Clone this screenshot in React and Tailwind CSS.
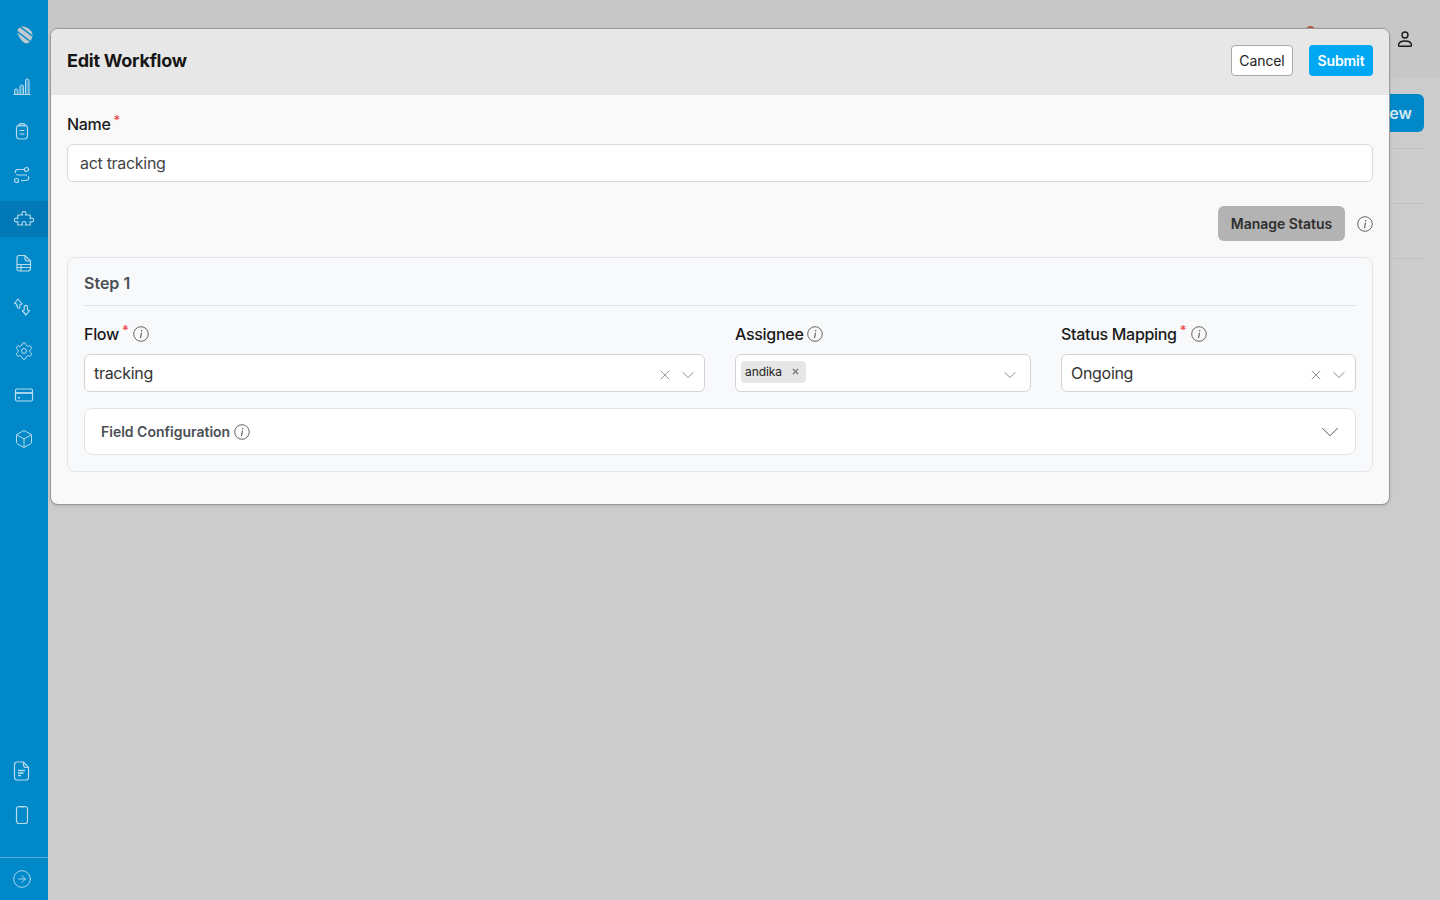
import { Box, ChevronDown, CircleArrowRight, Settings, X } from 'lucide-react'

const font = { fontFamily: 'Inter, "Noto Sans", sans-serif' }

function Bars() {
  return (
    <svg width="18" height="18" viewBox="0 0 18 18" fill="none" stroke="currentColor" strokeWidth="1">
      <path d="M.5 16.500h17" />
      <rect x="1.500" y="11" width="3.500" height="5.500" rx="1.500" fill="#3ea3d6" />
      <rect x="7" y="7" width="3.500" height="9.500" rx="1.500" fill="#3ea3d6" />
      <rect x="12.500" y="1" width="3.500" height="15.500" rx="1.500" fill="#3ea3d6" />
    </svg>
  )
}

function Clipboard() {
  return (
    <svg width="18" height="18" viewBox="0 0 18 18" fill="none" stroke="currentColor" strokeWidth="1.200">
      <rect x="3.500" y="3" width="11" height="14" rx="3.500" />
      <path d="M6 3.500c0-1.500.8-2 2-2h2c1.200 0 2 .5 2 2v.5H6zM6.500 8.500h5M6.500 12h5" />
    </svg>
  )
}

function RouteIcon() {
  return (
    <svg width="18" height="18" viewBox="0 0 18 18" fill="none" stroke="currentColor" strokeWidth="1.200">
      <circle cx="13.500" cy="3.500" r="2" />
      <circle cx="3.500" cy="14.500" r="2" />
      <path d="M11 3.500H5a2.700 2.700 0 0 0 0 5.500h8a2.700 2.700 0 0 1 0 5.500H7.500" strokeDasharray="11 1.500" />
    </svg>
  )
}

function PuzzleIcon() {
  return (
    <svg width="20" height="16" viewBox="0 0 20 16" fill="none" stroke="currentColor" strokeWidth="1.100" strokeLinejoin="round">
      <path d="M3.800 4H8.700a2 2 0 1 1 2.600 0H16.200V7.700a2 2 0 1 1 0 2.600V14H11.300a2 2 0 1 0-2.600 0H3.800V10.300a2 2 0 1 1 0-2.600z" />
    </svg>
  )
}

function Sheet() {
  return (
    <svg width="18" height="18" viewBox="0 0 18 18" fill="none" stroke="currentColor" strokeWidth="1.200">
      <path d="M4 1.500h6l5.500 5.500v7.500a2.500 2.500 0 0 1-2.500 2.500H4a2 2 0 0 1-2-2v-11.500a2 2 0 0 1 2-2z" />
      <path d="M10 1.500v3a2.500 2.500 0 0 0 2.500 2.500h3M2 10.500h13.500M2 13.500h13.500M6 10.500V17" />
    </svg>
  )
}

function Swap() {
  return (
    <svg width="18" height="18" viewBox="0 0 18 18" fill="none" stroke="currentColor" strokeWidth="1.200" strokeLinejoin="round">
      <path d="M5 1 1.500 5.500l2 .5 1 3.500c.4 1 2 1 2.300 0l.2-3 2-.5z" />
      <path d="M13 17l3.500-4.500-2-.5V8.500c0-1.300-3-1.500-3.300 0V12l-2 .5z" />
    </svg>
  )
}

function Card() {
  return (
    <svg width="20" height="20" viewBox="0 0 20 20" fill="none" stroke="currentColor" strokeWidth="1.200">
      <rect x="1.500" y="4" width="17" height="12" rx="1.500" />
      <path d="M1.500 8h17" strokeWidth="1.800" />
      <path d="M4 12.800h2" strokeWidth="1.600" />
    </svg>
  )
}

function Doc() {
  return (
    <svg width="18" height="20" viewBox="0 0 18 20" fill="none" stroke="currentColor" strokeWidth="1.200">
      <path d="M4 1h6.500l5 5.500V16.500a2.500 2.500 0 0 1-2.500 2.500H4a2.500 2.500 0 0 1-2.500-2.500v-13A2.500 2.500 0 0 1 4 1z" />
      <path d="M10.500 1v3a2.500 2.500 0 0 0 2.500 2.500h2.500" />
      <path d="M5 9.500h7M5 12h5.500M5 14.500h3" strokeWidth="1.500" />
    </svg>
  )
}

function Phone() {
  return (
    <svg width="14" height="20" viewBox="0 0 14 20" fill="none" stroke="currentColor" strokeWidth="1.200">
      <rect x="1.500" y="1.500" width="11" height="17" rx="2.500" />
      <path d="M4.500 2h5M6.700 16h.6" />
    </svg>
  )
}

function Logo() {
  return (
    <svg width="16" height="18" viewBox="0 0 16 18">
      <defs>
        <clipPath id="logo-shape">
          <path d="M6 .5c3 0 9 3.500 9.500 8 .3 3.500-2 8-6 9C6 17.500.5 10 .5 5.500.5 2.500 3 .5 6 .5z" />
        </clipPath>
      </defs>
      <g clipPath="url(#logo-shape)">
        <rect width="16" height="18" fill="#bfc9ce" />
        <path d="M-1 4.500 14 16M2 0 17 11" stroke="#0088c9" strokeWidth="1.400" />
      </g>
    </svg>
  )
}

function UserIcon() {
  return (
    <svg width="18" height="18" viewBox="0 0 18 18" fill="none" stroke="#1c1c1c" strokeWidth="1.400">
      <circle cx="9" cy="5" r="3" />
      <path d="M2.500 15.500c0-3 2-4.500 6.500-4.500s6.500 1.500 6.500 4.500c0 .5-.4.700-.8.700h-11.400c-.4 0-.8-.2-.8-.7z" />
    </svg>
  )
}

function Info({ size = 16 }) {
  return (
    <svg width={size} height={size} viewBox="0 0 16 16" fill="none" className="shrink-0">
      <circle cx="8" cy="8" r="7.300" stroke="#555" strokeWidth="0.900" />
      <path d="M8.400 7 7.600 11.600" stroke="#555" strokeWidth="1.100" strokeLinecap="round" />
      <circle cx="8.700" cy="4.700" r="0.750" fill="#555" />
    </svg>
  )
}

// left: the picture has some icons sitting 2px off centre
function NavRow({ children, active, left }) {
  return (
    <div className={`h-9 flex items-center justify-center ${active ? 'bg-[#0079b6]' : ''} ${left ? 'pr-1' : ''}`}>
      {children}
    </div>
  )
}

function Sidebar() {
  return (
    <aside className="w-12 shrink-0 h-full bg-[#0088c9] text-[#b9dbec] flex flex-col">
      <div className="h-[69px] shrink-0 flex items-center justify-center pl-0.5">
        <Logo />
      </div>
      <div className="flex flex-col gap-2">
        <NavRow left><Bars /></NavRow>
        <NavRow left><Clipboard /></NavRow>
        <NavRow left><RouteIcon /></NavRow>
        <NavRow active><PuzzleIcon /></NavRow>
        <NavRow><Sheet /></NavRow>
        <NavRow left><Swap /></NavRow>
        <NavRow><Settings size={20} strokeWidth={1.200} /></NavRow>
        <NavRow><Card /></NavRow>
        <NavRow><Box size={20} strokeWidth={1.200} /></NavRow>
      </div>
      <div className="mt-auto flex flex-col gap-2">
        <NavRow left><Doc /></NavRow>
        <NavRow left><Phone /></NavRow>
      </div>
      <div className="mt-6 h-[43px] border-t border-[#5fb0db] flex items-center justify-center pr-1">
        <CircleArrowRight size={20} strokeWidth={1.100} />
      </div>
    </aside>
  )
}

function Background() {
  return (
    <div className="h-full flex flex-col">
      <header className="h-[78px] shrink-0 bg-[#c7c7c7] relative flex items-start justify-end pr-[26px] pt-[30px]">
        <span className="absolute right-[125px] top-[26px] w-[9px] h-[9px] rounded-full bg-[#b8523f]" />
        <UserIcon />
      </header>
      <div className="flex-1 px-4 pt-4">
        <div className="flex justify-end">
          <button className="h-[38px] w-[110px] rounded-md bg-[#0088c9] text-[#d5e8f2] text-[16px] font-semibold pr-3 text-right">New</button>
        </div>
        <div className="mt-4 h-[56px] border-t border-b border-[#bdbdc3]" />
        <div className="h-[55px] border-b border-[#bdbdc3]" />
      </div>
    </div>
  )
}

function Label({ text, required, info, gap = 'ml-[5px]' }) {
  return (
    <div className="flex items-center h-5 text-[16px] font-medium text-[#1a1a1a] tracking-[-0.3px]">
      {text}
      {required && <span className="text-[#ef4444] text-[13px] ml-[3px] -mt-2 leading-none">*</span>}
      {info && <span className={gap}><Info /></span>}
    </div>
  )
}

function SelectBox({ value, clearable, chevronGap = 'mr-1.5', children }) {
  return (
    <div className="mt-2.5 h-[38px] bg-white border border-[#d4d4d8] rounded-md flex items-center">
      {value && <span className="pl-[9px] text-[16px] text-[#333] tracking-[-0.3px]">{value}</span>}
      {children}
      <div className="ml-auto flex items-center text-[#8a8a8a]">
        {clearable && <X size={16} strokeWidth={1.300} className="mr-[5px] mt-1" />}
        <ChevronDown size={20} strokeWidth={1.200} className={`${chevronGap} mt-1`} />
      </div>
    </div>
  )
}

function WorkflowModal() {
  return (
    <div className="absolute left-0.5 top-7 w-[1340px] h-[477px] bg-[#f9f9f9] border border-[#9a9a9a] rounded-lg overflow-hidden shadow-sm">
      <div className="h-[66px] bg-[#e7e7e7] flex items-center pl-4 pr-4 pb-[3px]">
        <h2 className="text-[18px] font-bold text-[#161616] tracking-[-0.25px]">Edit Workflow</h2>
        <button className="ml-auto h-[31px] w-[62px] bg-white border border-[#a8a8a8] rounded text-[14px] text-[#222] tracking-[-0.1px]">Cancel</button>
        <button className="ml-4 h-[31px] w-16 bg-[#00a8f3] rounded text-[14px] font-semibold text-white tracking-[-0.1px]">Submit</button>
      </div>
      <div className="px-4 pt-[19px]">
        <Label text="Name" required />
        <div className="mt-2.5 h-[38px] bg-white border border-[#d9d9dc] rounded-md flex items-center pl-3 text-[16px] text-[#444] tracking-[-0.3px]">
          act tracking
        </div>
        <div className="mt-6 flex items-center justify-end">
          <button className="h-[35px] w-[127px] bg-[#b3b3b3] rounded-md text-[14px] font-semibold text-[#2e2e2e]">Manage Status</button>
          <span className="ml-3"><Info /></span>
        </div>
        <div className="mt-4 h-[215px] border border-[#e3e5e8] rounded-lg bg-[#f8f9fa] px-4">
          <div className="h-12 pt-0.5 border-b border-[#dfe1e4] flex items-center text-[16px] font-semibold text-[#4b4f55]">Step 1</div>
          <div className="mt-[18px] grid grid-cols-[621px_296px_295px] gap-x-[30px]">
            <div>
              <Label text="Flow" required info />
              <SelectBox value="tracking" clearable />
            </div>
            <div>
              <Label text="Assignee" info gap="ml-1" />
              <SelectBox chevronGap="mr-2.5">
                <span className="ml-[5px] -mt-[3px] h-[22px] pl-1 pr-1.5 bg-[#e6e6e6] rounded flex items-center text-[12px] text-[#222] tracking-[-0.1px]">
                  andika
                  <X size={9} strokeWidth={3.500} className="ml-[9px] text-[#777]" />
                </span>
              </SelectBox>
            </div>
            <div>
              <Label text="Status Mapping" required info />
              <SelectBox value="Ongoing" clearable />
            </div>
          </div>
          <div className="mt-4 h-[47px] bg-white border border-[#e3e3e6] rounded-lg flex items-center pl-4 pr-[10px]">
            <span className="text-[14px] font-semibold text-[#4b4f55]">Field Configuration</span>
            <span className="ml-1"><Info /></span>
            <ChevronDown size={30} strokeWidth={0.800} className="ml-auto text-[#555]" />
          </div>
        </div>
      </div>
    </div>
  )
}

export default function App() {
  return (
    <div className="flex h-screen bg-[#cccccc] overflow-hidden" style={font}>
      <Sidebar />
      <main className="relative flex-1 h-full">
        <Background />
        <WorkflowModal />
      </main>
    </div>
  )
}
